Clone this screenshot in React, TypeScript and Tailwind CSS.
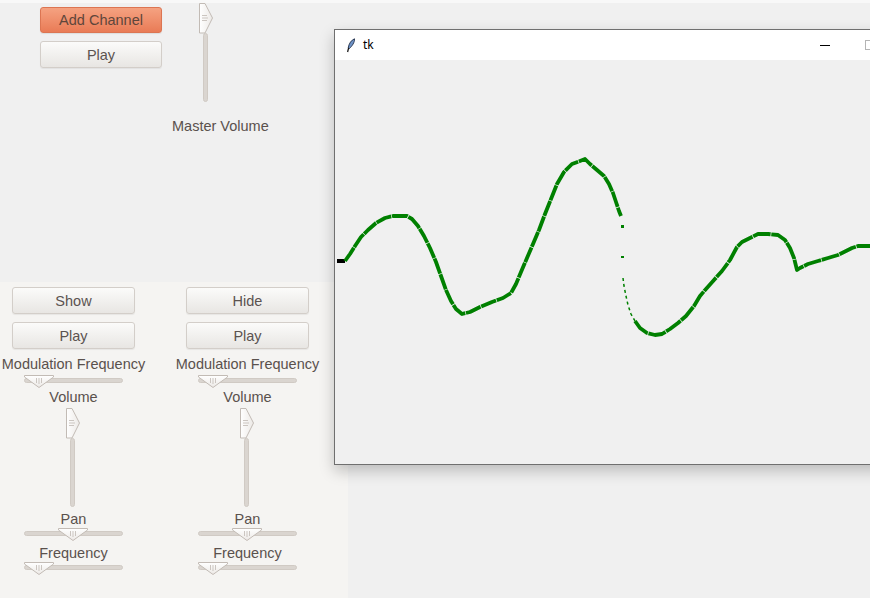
import React from "react";

const FONT = "font-['Liberation_Sans',Arial,sans-serif]";

function VThumb() {
  return (
    <svg width="15" height="31" viewBox="0 0 15 31" className="block">
      <defs>
        <linearGradient id="vt" x1="0" x2="1" y1="0" y2="0">
          <stop offset="0" stopColor="#ffffff" />
          <stop offset="1" stopColor="#ece9e6" />
        </linearGradient>
      </defs>
      <polygon points="0.5,0.5 6,0.5 13.5,15 6,30 0.5,30" fill="url(#vt)" stroke="#c2bbb5" />
      <line x1="3" y1="12.5" x2="8" y2="12.5" stroke="#cbc5c0" />
      <line x1="3" y1="15" x2="9" y2="15" stroke="#cbc5c0" />
      <line x1="3" y1="17.5" x2="8" y2="17.5" stroke="#cbc5c0" />
    </svg>
  );
}

function HThumb() {
  return (
    <svg width="30" height="13" viewBox="0 0 30 13" className="block">
      <defs>
        <linearGradient id="ht" x1="0" x2="0" y1="0" y2="1">
          <stop offset="0" stopColor="#ffffff" />
          <stop offset="1" stopColor="#ece9e6" />
        </linearGradient>
      </defs>
      <polygon points="0.5,0.5 29.5,0.5 29.5,2 15,12.5 0.5,2" fill="url(#ht)" stroke="#c2bbb5" />
      <line x1="12.5" y1="3" x2="12.5" y2="8" stroke="#cbc5c0" />
      <line x1="15" y1="3" x2="15" y2="9" stroke="#cbc5c0" />
      <line x1="17.5" y1="3" x2="17.5" y2="8" stroke="#cbc5c0" />
    </svg>
  );
}

function VSlider() {
  return (
    <div className="relative w-[15px] h-[99px]">
      <div className="absolute left-[4px] top-[30px] w-[5px] h-[69px] rounded-full bg-[#dad5d0] border border-[#d0cac4]" />
      <div className="absolute left-0 top-0">
        <VThumb />
      </div>
    </div>
  );
}

function HSlider({ thumb }: { thumb: number }) {
  return (
    <div className="relative w-[99px] h-[13px]">
      <div className="absolute left-0 right-0 top-[3px] h-[5px] rounded-full bg-[#dad5d0] border border-[#d0cac4]" />
      <div className="absolute top-0" style={{ left: thumb }}>
        <HThumb />
      </div>
    </div>
  );
}

function Btn({ label, accent }: { label: string; accent?: boolean }) {
  return (
    <button
      className={
        accent
          ? "w-full h-[26px] pt-[1px] rounded-[3px] border border-[#dc7552] bg-gradient-to-b from-[#f5a281] to-[#e97b56] text-[14.5px] text-[#5e463b] shadow-[0_1px_1px_rgba(0,0,0,0.08)]"
          : "w-full h-[27px] pt-[2px] rounded-[3px] border border-[#d3cec9] bg-gradient-to-b from-[#fbfbfa] to-[#e8e6e3] text-[14.5px] text-[#5b5350] shadow-[0_1px_1px_rgba(0,0,0,0.06)]"
      }
    >
      {label}
    </button>
  );
}

function Label({ text }: { text: string }) {
  return <div className="h-[17px] leading-[20px] text-[14.5px] text-[#5a514d] whitespace-nowrap">{text}</div>;
}

function Channel({ first }: { first: string }) {
  return (
    <div className="w-[147px] flex flex-col items-center pt-[5px]">
      <div className="w-[123px]">
        <Btn label={first} />
      </div>
      <div className="w-[123px] mt-[8px]">
        <Btn label="Play" />
      </div>
      <div className="mt-[5px]">
        <Label text="Modulation Frequency" />
      </div>
      <div className="mt-[4px]">
        <HSlider thumb={0} />
      </div>
      <div className="-mt-[1px]">
        <Label text="Volume" />
      </div>
      <div className="mt-[4px]">
        <VSlider />
      </div>
      <div className="mt-[2px]">
        <Label text="Pan" />
      </div>
      <div className="mt-[2px]">
        <HSlider thumb={34} />
      </div>
      <div className="mt-[2px]">
        <Label text="Frequency" />
      </div>
      <div className="mt-[2px]">
        <HSlider thumb={0} />
      </div>
    </div>
  );
}

const waveA =
  "345,261 350,254 355,246 361,237 368,230 376,223 385,218 393,216 407,216 412,219 418,226 424,236 430,248 436,262 441,276 446,290 451,301 456,309 462,314 470,312 480,307 492,302 503,298 511,293 516,284 521,272 527,258 533,244 539,230 545,214 551,199 557,184 564,172 572,164 580,161 585,159 590,164 597,170 604,176 609,184 613,193 616,202 619,211 621,216";
const waveB = "623,278 624,286 626,296 628,305 631,314 635,321";
const waveC =
  "635,321 640,328 647,333 655,335 662,334 670,329 678,323 686,316 694,306 700,296 706,289 714,280 722,271 730,260 737,247 742,242 750,238 758,234 768,234 778,235 785,240 790,248 794,258 797,270 800,268 808,264 818,261 828,258 838,255 846,251 852,248 858,246 872,246";

function TkWindow() {
  return (
    <div className="absolute left-[334px] top-[29px] w-[560px] h-[436px] border border-[#6f6f6f] bg-[#f0f0f0] shadow-[0_6px_14px_rgba(0,0,0,0.22)] flex flex-col">
      <div className="h-[30px] bg-white flex items-center shrink-0">
        <svg width="10" height="15" viewBox="0 0 10 15" className="ml-[11px]">
          <path d="M8.5 0.8 C5.5 2 2.8 5.5 2.2 10 L3.4 10.6 C6 8 8.8 4.5 8.5 0.8 Z" fill="#6f93c8" stroke="#1e2b44" strokeWidth="0.9" />
          <line x1="2.6" y1="10" x2="1.6" y2="14" stroke="#111" strokeWidth="1.2" />
        </svg>
        <span className="ml-[7px] text-[12px] text-black font-['Noto_Sans',sans-serif]">tk</span>
        <div className="ml-[446px] w-[10px] h-px bg-black" />
        <div className="ml-[35px] w-[10px] h-[10px] border border-[#b4b4b4]" />
      </div>
      <div className="flex-1 relative">
        <svg width="560" height="405" viewBox="335 60 560 405" className="block">
          <rect x="337" y="259" width="8" height="4" fill="#000" />
          <polyline points={waveA} fill="none" stroke="#008000" strokeWidth="3.8" strokeLinejoin="round" strokeDasharray="16 0.7" />
          <rect x="621" y="225" width="3" height="3" fill="#008000" />
          <rect x="621" y="256" width="3" height="2" fill="#008000" />
          <polyline points={waveB} fill="none" stroke="#008000" strokeWidth="1.5" strokeDasharray="3 3" />
          <polyline points={waveC} fill="none" stroke="#008000" strokeWidth="3.8" strokeLinejoin="round" strokeDasharray="18 0.7" />
        </svg>
      </div>
    </div>
  );
}

export default function App() {
  return (
    <div className={`relative w-[870px] h-[598px] overflow-hidden bg-[#f0f0f0] ${FONT}`}>
      <div className="h-[3px] bg-[#f8f8f8]" />
      <div className="h-[279px] flex pl-[40px]">
        <div className="w-[122px] flex flex-col pt-[4px]">
          <Btn label="Add Channel" accent />
          <div className="mt-[8px]">
            <Btn label="Play" />
          </div>
        </div>
        <div className="w-[96px] ml-[10px] flex flex-col">
          <div className="ml-[27px]">
            <VSlider />
          </div>
          <div className="mt-[14px]">
            <Label text="Master Volume" />
          </div>
        </div>
      </div>
      <div className="w-[348px] h-[316px] bg-[#f5f4f2] flex gap-[27px]">
        <Channel first="Show" />
        <Channel first="Hide" />
      </div>
      <TkWindow />
    </div>
  );
}
